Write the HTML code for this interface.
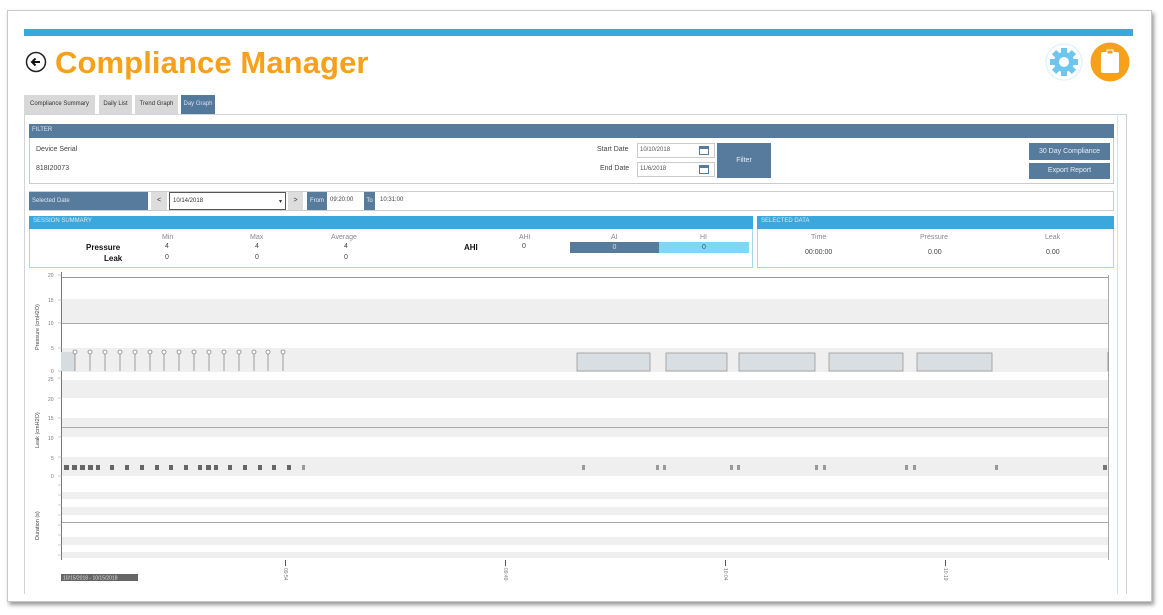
<!DOCTYPE html>
<html><head><meta charset="utf-8"><style>
*{margin:0;padding:0;box-sizing:border-box}
body{width:1163px;height:615px;background:#fff;position:relative;overflow:hidden;font-family:"Liberation Sans",sans-serif;color:#333}
.a{position:absolute}
.t{position:absolute;font-size:7px;white-space:nowrap;color:#444}
.hd{background:#567b9c;color:#dfe8f0;font-size:6px;padding:3px 3px}
.bt{background:#567b9c;color:#e8eef4;font-size:7px;text-align:center}
.tab{position:absolute;top:95px;height:19px;background:#d8d8d8;font-size:6px;line-height:19px;text-align:center;color:#333}
</style></head><body>
<div class="a" style="left:7px;top:10px;width:1145px;height:592px;border:1px solid #c8c8c8;box-shadow:2px 3px 4px #999;background:#fff"></div>
<div class="a" style="left:24px;top:29px;width:1109px;height:7px;background:#3aa8dc"></div>
<svg class="a" style="left:25px;top:51px" width="22" height="22"><circle cx="11" cy="11" r="9.5" fill="#fff" stroke="#222" stroke-width="1.5"/><path d="M15 11H7M10.5 7.5L7 11l3.5 3.5" stroke="#111" stroke-width="2" fill="none"/></svg>
<div class="a" style="left:55px;top:45px;font-size:31px;font-weight:bold;color:#f7a01a;letter-spacing:.1px">Compliance Manager</div>
<svg class="a" style="left:1045px;top:43px" width="38" height="38"><circle cx="19" cy="19" r="18" fill="#fff" stroke="#e2f2fb" stroke-width="1.5"/>
<g fill="#6ec6ee" transform="translate(19 19)"><circle r="10"/><rect x="-3" y="-14" width="6" height="28"/><rect x="-3" y="-14" width="6" height="28" transform="rotate(45)"/><rect x="-3" y="-14" width="6" height="28" transform="rotate(90)"/><rect x="-3" y="-14" width="6" height="28" transform="rotate(135)"/></g><circle cx="19" cy="19" r="5" fill="#fff"/></svg>
<svg class="a" style="left:1090px;top:42px" width="40" height="40"><circle cx="20" cy="20" r="19.5" fill="#f7a01a"/><rect x="11" y="10" width="18" height="21" rx="2" fill="#fff"/><rect x="17" y="8" width="6" height="4" fill="#f7a01a" stroke="#fff" stroke-width="1"/></svg>
<div class="tab" style="left:24px;width:71px">Compliance Summary</div>
<div class="tab" style="left:99px;width:33px">Daily List</div>
<div class="tab" style="left:135px;width:43px">Trend Graph</div>
<div class="tab" style="left:181px;width:34px;background:#52799b;color:#dde">Day Graph</div>
<div class="a" style="left:24px;top:114px;width:1103px;height:480px;border:1px solid #d0d4d8;border-bottom:none"></div>
<div class="a" style="left:1117px;top:114px;width:1px;height:480px;background:#cfe4ea"></div>
<div class="a" style="left:29px;top:124px;width:1085px;height:60px;border:1px solid #c8ccd0;background:#fff"></div>
<div class="a hd" style="left:29px;top:124px;width:1085px;height:14px">FILTER</div>
<div class="t" style="left:36px;top:146px">Device Serial</div>
<div class="t" style="left:36px;top:165px">818I20073</div>
<div class="t" style="left:597px;top:146px">Start Date</div>
<div class="t" style="left:600px;top:165px">End Date</div>
<div class="a" style="left:637px;top:143px;width:78px;height:15px;border:1px solid #ccc;font-size:6px;padding:3px 2px;color:#555">10/10/2018</div>
<div class="a" style="left:637px;top:162px;width:78px;height:15px;border:1px solid #ccc;font-size:6px;padding:3px 2px;color:#555">11/6/2018</div>
<div class="a" style="left:699px;top:146px;width:10px;height:9px;border:1px solid #567b9c;border-top-width:3px"></div>
<div class="a" style="left:699px;top:165px;width:10px;height:9px;border:1px solid #567b9c;border-top-width:3px"></div>
<div class="a bt" style="left:717px;top:143px;width:54px;height:35px;line-height:35px">Filter</div>
<div class="a bt" style="left:1029px;top:143px;width:81px;height:17px;line-height:17px">30 Day Compliance</div>
<div class="a bt" style="left:1029px;top:163px;width:81px;height:16px;line-height:16px">Export Report</div>
<div class="a" style="left:29px;top:191px;width:1085px;height:20px;border:1px solid #ccc"></div>
<div class="a hd" style="left:29px;top:192px;width:119px;height:18px;line-height:12px">Selected Date</div>
<div class="a" style="left:151px;top:192px;width:16px;height:18px;background:#ddd;font-size:7px;text-align:center;line-height:18px">&lt;</div>
<div class="a" style="left:169px;top:192px;width:117px;height:18px;border:1px solid #555;font-size:6px;padding:5px 3px">10/14/2018<span style="float:right">▾</span></div>
<div class="a" style="left:288px;top:192px;width:15px;height:18px;background:#ddd;font-size:7px;text-align:center;line-height:18px">&gt;</div>
<div class="a bt" style="left:307px;top:192px;width:20px;height:18px;line-height:18px;font-size:6px">From</div>
<div class="t" style="left:330px;top:197px;font-size:6px">09:20:00</div>
<div class="a bt" style="left:364px;top:192px;width:11px;height:18px;line-height:18px;font-size:6px">To</div>
<div class="t" style="left:380px;top:197px;font-size:6px">10:31:00</div>
<div class="a" style="left:29px;top:216px;width:724px;height:52px;border:1px solid #a8d8f0"></div>
<div class="a hd" style="left:29px;top:216px;width:724px;height:13px;background:#3aa8dc;padding:2px 4px">SESSION SUMMARY</div>
<div class="t" style="left:162px;top:234px;color:#888">Min</div>
<div class="t" style="left:250px;top:234px;color:#888">Max</div>
<div class="t" style="left:331px;top:234px;color:#888">Average</div>
<div class="t" style="left:86px;top:243px;font-weight:bold;color:#111;font-size:8px">Pressure</div>
<div class="t" style="left:104px;top:254px;font-weight:bold;color:#111;font-size:8px">Leak</div>
<div class="t" style="left:165px;top:243px">4</div><div class="t" style="left:255px;top:243px">4</div><div class="t" style="left:344px;top:243px">4</div>
<div class="t" style="left:165px;top:254px">0</div><div class="t" style="left:255px;top:254px">0</div><div class="t" style="left:344px;top:254px">0</div>
<div class="t" style="left:464px;top:243px;font-weight:bold;color:#111;font-size:8px">AHI</div>
<div class="t" style="left:519px;top:234px;color:#888">AHI</div>
<div class="t" style="left:522px;top:243px">0</div>
<div class="t" style="left:611px;top:234px;color:#888">AI</div>
<div class="t" style="left:700px;top:234px;color:#888">HI</div>
<div class="a" style="left:570px;top:242px;width:89px;height:11px;line-height:11px;background:#567b9c;color:#ddd;font-size:7px;text-align:center">0</div>
<div class="a" style="left:659px;top:242px;width:90px;height:11px;line-height:11px;background:#80d6f7;color:#456;font-size:7px;text-align:center">0</div>
<div class="a" style="left:757px;top:216px;width:357px;height:52px;border:1px solid #a8d8f0"></div>
<div class="a hd" style="left:757px;top:216px;width:357px;height:13px;background:#3aa8dc;padding:2px 4px">SELECTED DATA</div>
<div class="t" style="left:811px;top:234px;color:#888">Time</div>
<div class="t" style="left:920px;top:234px;color:#888">Pressure</div>
<div class="t" style="left:1045px;top:234px;color:#888">Leak</div>
<div class="t" style="left:805px;top:249px">00:00:00</div>
<div class="t" style="left:928px;top:249px">0.00</div>
<div class="t" style="left:1046px;top:249px">0.00</div>
<svg class="a" style="left:0;top:0" width="1163" height="615">
<g fill="#efefef">
<rect x="61" y="299" width="1047" height="24"/><rect x="61" y="348" width="1047" height="24"/>
<rect x="61" y="380" width="1047" height="18"/><rect x="61" y="418" width="1047" height="19"/><rect x="61" y="457" width="1047" height="19"/>
<rect x="61" y="492" width="1047" height="7"/><rect x="61" y="507" width="1047" height="8"/><rect x="61" y="537" width="1047" height="8"/><rect x="61" y="552" width="1047" height="6"/>
</g>
<g stroke="#aaa" stroke-width="1">
<line x1="61" y1="277.5" x2="1108" y2="277.5" stroke="#999"/><line x1="61" y1="323.5" x2="1108" y2="323.5"/>
<line x1="61" y1="427.5" x2="1108" y2="427.5"/><line x1="61" y1="522.5" x2="1108" y2="522.5"/>
<line x1="1108.5" y1="275" x2="1108.5" y2="560"/>
</g>
<g stroke="#777" stroke-width="1"><line x1="61.5" y1="272" x2="61.5" y2="560"/></g>
<g stroke="#999" stroke-width="0.6">
<path d="M58 275h4M58 300h4M58 323h4M58 348h4M58 371h4M58 378h4M58 398h4M58 418h4M58 437h4M58 457h4M58 476h4M58 485h4M58 495h4M58 505h4M58 515h4M58 525h4M58 535h4M58 545h4M58 555h4"/>
</g>
<g font-size="5" fill="#777" font-family="Liberation Sans">
<text x="48" y="277">20</text><text x="48" y="302">15</text><text x="48" y="325">10</text><text x="51" y="350">5</text><text x="51" y="373">0</text>
<text x="48" y="381">25</text><text x="48" y="401">20</text><text x="48" y="420">15</text><text x="48" y="440">10</text><text x="51" y="460">5</text><text x="51" y="478">0</text>
<text transform="translate(39 350) rotate(-90)" font-size="5.5" fill="#444">Pressure (cmH2O)</text>
<text transform="translate(39 448) rotate(-90)" font-size="5.5" fill="#444">Leak (cmH2O)</text>
<text transform="translate(39 540) rotate(-90)" font-size="5.5" fill="#444">Duration (s)</text>
</g>
<rect x="61" y="352" width="14" height="19" fill="#d6dcdf"/>
<g stroke="#888" fill="#fff" stroke-width="0.8">
<path d="M75 352v19M90 352v19M105 352v19M120 352v19M135 352v19M150 352v19M164 352v19M179 352v19M194 352v19M209 352v19M224 352v19M239 352v19M254 352v19M268 352v19M283 352v19M1108 352v19"/>
<g><circle cx="75" cy="352" r="2"/><circle cx="90" cy="352" r="2"/><circle cx="105" cy="352" r="2"/><circle cx="120" cy="352" r="2"/><circle cx="135" cy="352" r="2"/><circle cx="150" cy="352" r="2"/><circle cx="164" cy="352" r="2"/><circle cx="179" cy="352" r="2"/><circle cx="194" cy="352" r="2"/><circle cx="209" cy="352" r="2"/><circle cx="224" cy="352" r="2"/><circle cx="239" cy="352" r="2"/><circle cx="254" cy="352" r="2"/><circle cx="268" cy="352" r="2"/><circle cx="283" cy="352" r="2"/></g>
</g>
<g fill="#d8dee1" stroke="#999" stroke-width="0.8">
<rect x="577" y="353" width="73" height="18"/><rect x="666" y="353" width="61" height="18"/><rect x="739" y="353" width="76" height="18"/><rect x="829" y="353" width="74" height="18"/><rect x="917" y="353" width="75" height="18"/>
</g>
<g fill="#666">
<rect x="64" y="465" width="5" height="5"/><rect x="72" y="465" width="5" height="5"/><rect x="80" y="465" width="5" height="5"/><rect x="88" y="465" width="5" height="5"/><rect x="96" y="465" width="4" height="5"/><rect x="110" y="465" width="4" height="5"/><rect x="125" y="465" width="4" height="5"/><rect x="140" y="465" width="4" height="5"/><rect x="155" y="465" width="4" height="5"/><rect x="169" y="465" width="4" height="5"/><rect x="184" y="465" width="4" height="5"/><rect x="198" y="465" width="4" height="5"/><rect x="206" y="465" width="5" height="5"/><rect x="214" y="465" width="4" height="5"/><rect x="228" y="465" width="4" height="5"/><rect x="243" y="465" width="4" height="5"/><rect x="258" y="465" width="4" height="5"/><rect x="272" y="465" width="4" height="5"/><rect x="287" y="465" width="4" height="5"/><rect x="302" y="465" width="3" height="5" fill="#999"/>
<g fill="#999"><rect x="582" y="465" width="3" height="5"/><rect x="656" y="465" width="3" height="5"/><rect x="663" y="465" width="3" height="5"/><rect x="730" y="465" width="3" height="5"/><rect x="737" y="465" width="3" height="5"/><rect x="815" y="465" width="3" height="5"/><rect x="823" y="465" width="3" height="5"/><rect x="905" y="465" width="3" height="5"/><rect x="913" y="465" width="3" height="5"/><rect x="995" y="465" width="3" height="5"/><rect x="1103" y="465" width="4" height="5" fill="#777"/></g>
</g>
<g stroke="#555" stroke-width="1"><path d="M285.5 560v6M505.5 560v6M725.5 560v6M945.5 560v6"/></g>
<g font-size="5" fill="#777" font-family="Liberation Sans">
<text transform="translate(284 568) rotate(90)">09:54</text><text transform="translate(504 568) rotate(90)">09:49</text><text transform="translate(724 568) rotate(90)">10:04</text><text transform="translate(944 568) rotate(90)">10:19</text>
</g>
<rect x="61" y="574" width="77" height="7" fill="#666"/>
<text x="63" y="579.5" font-size="5" fill="#ddd" font-family="Liberation Sans">10/15/2018 - 10/15/2018</text>
</svg>
</body></html>
